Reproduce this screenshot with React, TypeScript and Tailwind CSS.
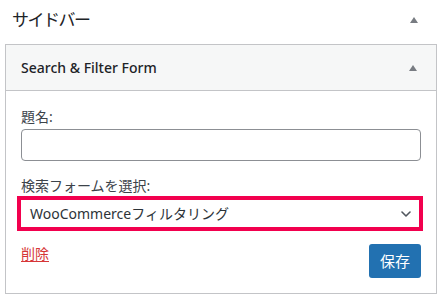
import React from 'react';

const Arrow: React.FC = () => (
  <svg width="8" height="6" viewBox="0 0 8 6" className="block">
    <polygon points="4,0 8,6 0,6" fill="#787c82" />
  </svg>
);

const Chevron: React.FC = () => (
  <svg width="10" height="6" viewBox="0 0 10 6" className="block">
    <path d="M1 1l4 4 4-4" fill="none" stroke="#50575e" strokeWidth="1.6" strokeLinecap="round" strokeLinejoin="round" />
  </svg>
);

export default function App() {
  return (
    <div className="w-[438px] h-[297px] bg-white overflow-hidden text-[#1d2327] font-['Noto_Sans','Noto_Sans_CJK_JP',sans-serif]">
      {/* Sidebar heading */}
      <div className="flex items-center justify-between h-[40px] pl-3 pr-[20px]">
        <h2 className="text-[17px] font-normal leading-5 tracking-[-1.5px]">サイドバー</h2>
        <Arrow />
      </div>

      {/* Widget */}
      <div className="mt-[4px] ml-[5px] mr-[1px] border border-[#c3c4c7] bg-white">
        <div className="flex items-center justify-between h-[46px] px-[15px] pr-[19px] bg-[#f6f7f7] border-b border-[#c3c4c7]">
          <h3 className="text-[14px] font-medium leading-5">Search &amp; Filter Form</h3>
          <Arrow />
        </div>

        <div className="px-[15px] pt-4 pb-[15px]">
          <label className="block text-[14px] leading-5 text-[#3c434a]">題名:</label>
          <input
            type="text"
            className="block mt-[2px] h-[32px] w-full border border-[#8c8f94] rounded-[4px] bg-white outline-none"
          />

          <label className="block mt-[15px] text-[14px] leading-5 text-[#3c434a]">検索フォームを選択:</label>
          <div className="-ml-[4px] -mr-[2px] h-[35px] border-4 border-[#f2004e] bg-white">
            <div className="flex items-center justify-between h-full pl-[9px] pr-[8px]">
              <span className="text-[14px] leading-5 text-[#2c3338]">WooCommerceフィルタリング</span>
              <Chevron />
            </div>
          </div>

          <div className="flex items-start justify-between mt-[13px]">
            <a className="text-[14px] leading-5 text-[#d63638] underline underline-offset-2 cursor-pointer">削除</a>
            <button className="h-[34px] w-[52px] rounded-[3px] bg-[#2271b1] text-white text-[15px] leading-5">保存</button>
          </div>
        </div>
      </div>
    </div>
  );
}
